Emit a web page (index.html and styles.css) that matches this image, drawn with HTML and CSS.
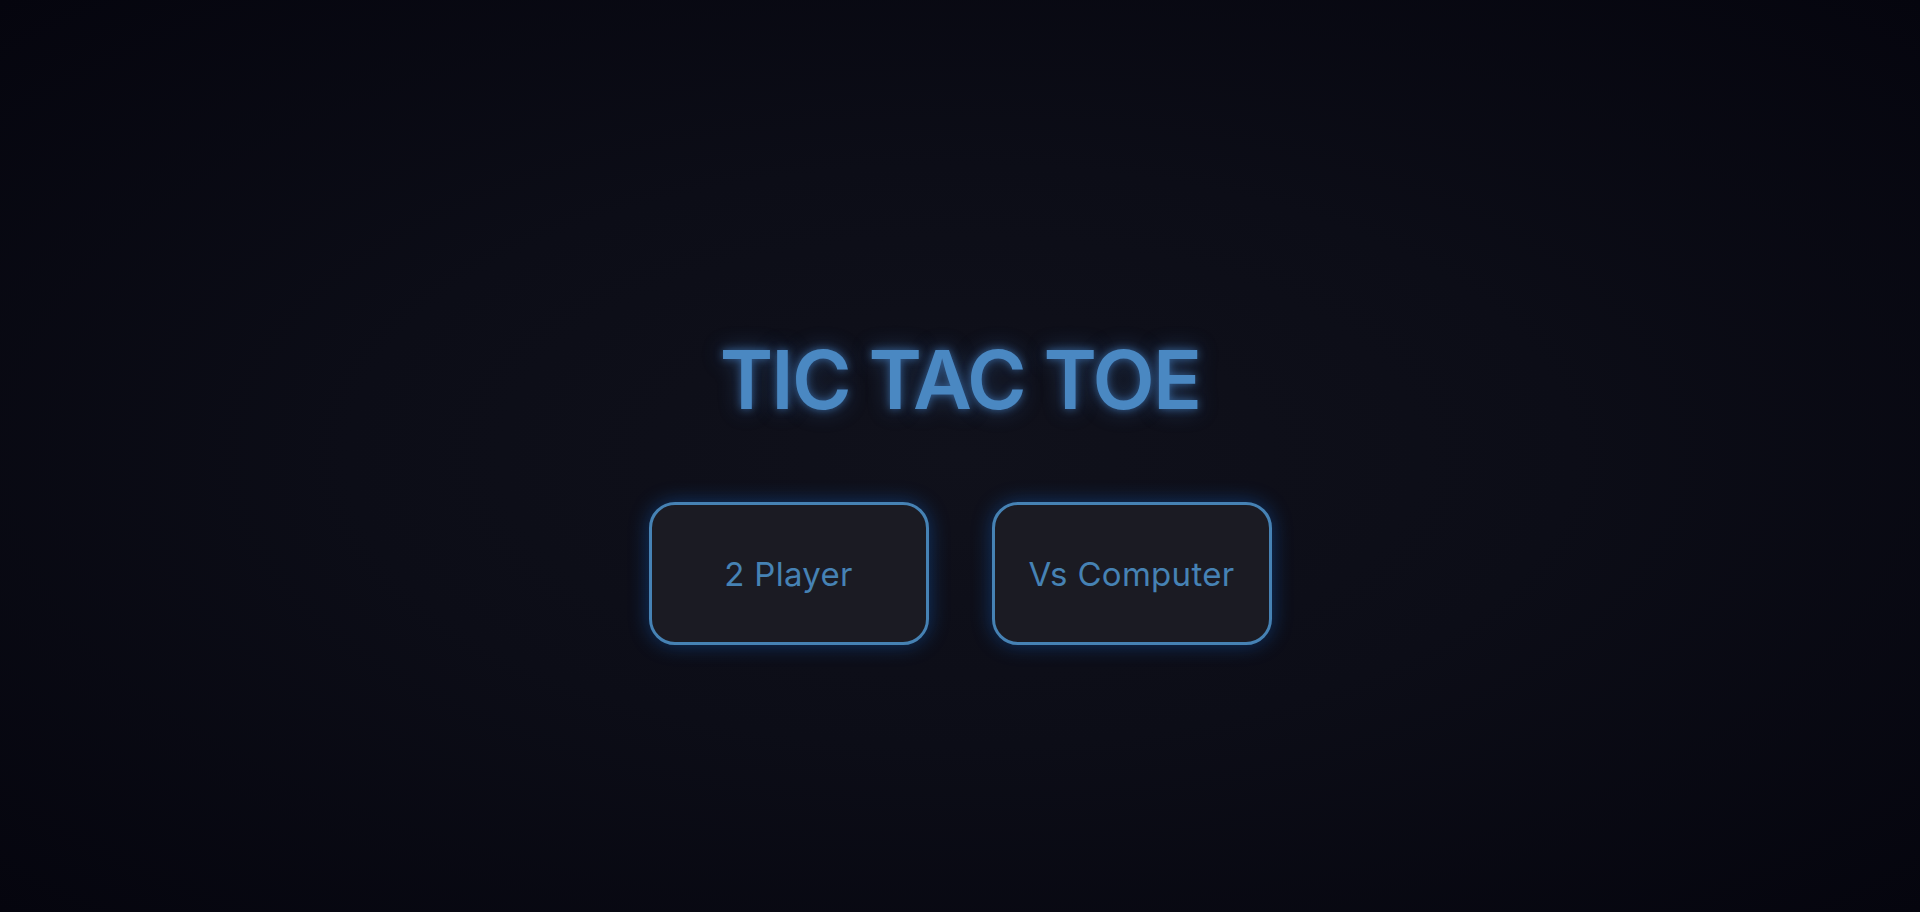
FILE: index.html
```html
<!DOCTYPE html>
<html lang="en">
<head>
<meta charset="utf-8">
<title>Tic Tac Toe</title>
<link rel="stylesheet" href="styles.css">
</head>
<body>
<main class="menu">
  <h1 class="title">TIC TAC TOE</h1>
  <div class="modes">
    <button class="mode-btn">2 Player</button>
    <button class="mode-btn">Vs Computer</button>
  </div>
</main>
</body>
</html>
```
FILE: styles.css
```css
* { box-sizing: border-box; }
html, body { margin: 0; height: 100%; }
body {
  background: radial-gradient(ellipse at center, #10111b 0%, #0c0d17 45%, #05050e 100%);
  font-family: Inter, "Noto Sans", sans-serif;
  color: #4682b4;
}
.menu {
  min-height: 100vh;
  display: flex;
  flex-direction: column;
  align-items: center;
  justify-content: center;
  padding-top: 63px;
}
.title {
  margin: 0 0 72px;
  font-size: 81px;
  line-height: 100px;
  font-weight: 600;
  color: #4a88c2;
  letter-spacing: -1.8px;
  text-shadow: 0 0 8px rgba(70, 130, 200, 0.65), 0 0 22px rgba(70, 130, 200, 0.4);
}
.modes {
  display: flex;
  gap: 63px;
}
.mode-btn {
  width: 280px;
  height: 143px;
  border: 3px solid #4682b4;
  border-radius: 26px;
  background: #1b1b23;
  color: #4682b4;
  font-family: Inter, "Noto Sans", sans-serif;
  font-size: 33px;
  font-weight: 400;
  letter-spacing: 0.3px;
  box-shadow: 0 0 20px rgba(20, 100, 200, 0.45);
  cursor: pointer;
}
```
